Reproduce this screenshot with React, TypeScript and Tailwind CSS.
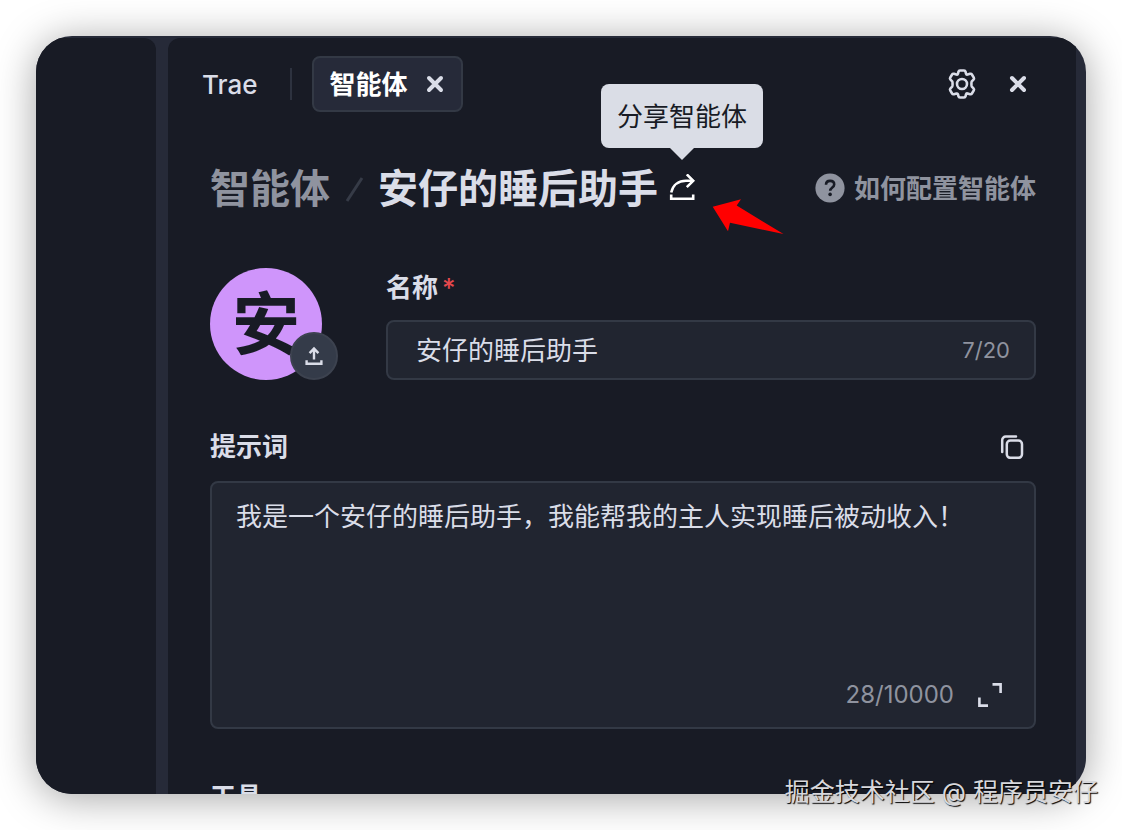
import { useState } from "react";

function CloseIcon() {
  return (
    <svg className="h-[18px] w-[18px]" viewBox="0 0 18 18" fill="none" stroke="currentColor" strokeWidth={4} strokeLinecap="round">
      <path d="M3 3l12 12M15 3L3 15" />
    </svg>
  );
}

function GearIcon() {
  return (
    <svg className="h-[30px] w-[30px]" viewBox="0 0 30 30" fill="none" stroke="currentColor" strokeWidth={2.6} strokeLinejoin="round">
      <path d="M13 1.5h4c.9 0 1.4.6 1.6 1.4l.4 1.7c.2.7.9 1.1 1.6.9l2.4-.7c.8-.2 1.5 0 1.9.7l1.9 3.2c.4.7.3 1.4-.3 2l-1.7 1.7c-.5.6-.5 4.6 0 5.2l1.7 1.7c.6.6.7 1.3.3 2l-1.9 3.2c-.4.7-1.1.9-1.9.7l-2.4-.7c-.7-.2-1.4.2-1.6.9l-.4 1.7c-.2.8-.7 1.4-1.6 1.4h-4c-.9 0-1.4-.6-1.6-1.4l-.4-1.7c-.2-.7-.9-1.1-1.6-.9l-2.4.7c-.8.2-1.5 0-1.9-.7l-1.9-3.2c-.4-.7-.3-1.4.3-2l1.7-1.7c.5-.6.5-4.6 0-5.2L3.5 10.7c-.6-.6-.7-1.3-.3-2l1.9-3.2c.4-.7 1.1-.9 1.9-.7l2.4.7c.7.2 1.4-.2 1.6-.9l.4-1.7c.2-.8.7-1.4 1.6-1.4z" />
      <circle cx="15" cy="15" r="5" />
    </svg>
  );
}

function ShareIcon() {
  return (
    <svg className="h-7 w-7" viewBox="0 0 28 28" fill="none" stroke="currentColor" strokeWidth={2.6}>
      <path d="M3.2 18.5C5 10.8 10.8 6.8 18 6.8h7" />
      <path d="M18.8 0.4l6.4 6.4-6.4 6.4" />
      <path d="M3.2 20.6v4.2h22v-4.2" />
    </svg>
  );
}

function UploadIcon() {
  return (
    <svg className="h-5 w-5" viewBox="0 0 20 20" fill="none" stroke="currentColor" strokeWidth={2.4}>
      <path d="M10 13.5V3M5.6 7.2L10 2.6l4.4 4.6" />
      <path d="M2.6 14.2v3.6h14.8v-3.6" />
    </svg>
  );
}

function CopyIcon() {
  return (
    <svg className="h-6 w-6" viewBox="0 0 24 24" fill="none" stroke="currentColor" strokeWidth={2.5} strokeLinecap="round">
      <rect x="6.8" y="5.6" width="15.2" height="17.2" rx="3.6" />
      <path d="M2.2 17V5.2a3.6 3.6 0 0 1 3.6-3.6H16" />
    </svg>
  );
}

function ExpandIcon() {
  return (
    <svg className="h-6 w-6" viewBox="0 0 24 24" fill="none" stroke="currentColor" strokeWidth={2.6}>
      <path d="M14.5 1.4h8.1V10M1.4 14.5v8.1H10" />
    </svg>
  );
}

export default function App() {
  const [name, setName] = useState("安仔的睡后助手");
  const [prompt, setPrompt] = useState("我是一个安仔的睡后助手，我能帮我的主人实现睡后被动收入！");

  return (
    <div className="relative flex h-screen overflow-hidden bg-white p-9 font-['Inter','Noto_Sans_CJK_SC',sans-serif] text-[26px] leading-9 text-[#dadde8]">
      <div className="flex min-w-0 flex-1 gap-3 overflow-hidden rounded-[36px] bg-[#262a38] pt-0.5 pr-2.5 shadow-[0_4px_40px_rgba(0,0,0,0.36)]">
        <aside className="w-[120px] shrink-0 rounded-t-xl bg-[#181b25]" />

        <main className="min-w-0 flex-1 rounded-tl-xl bg-[#181b25]">
          <header className="flex items-center pt-[18px] pr-[49px] pl-[34px]">
            <span className="pt-0.5 font-medium">Trae</span>
            <span className="ml-[33px] h-8 w-0.5 bg-[#2d323f]" />
            <div className="ml-5 flex h-14 items-center gap-[18px] rounded-lg border-2 border-[#333945] bg-[#262a39] pr-[17px] pl-[15px]">
              <span className="pt-0.5 font-bold text-white">智能体</span>
              <button type="button" aria-label="关闭标签">
                <CloseIcon />
              </button>
            </div>
            <div className="ml-auto flex items-center gap-8">
              <button type="button" aria-label="设置">
                <GearIcon />
              </button>
              <button type="button" aria-label="关闭">
                <CloseIcon />
              </button>
            </div>
          </header>

          <div className="pr-10 pl-[42px]">
            <div className="mt-12 flex h-14 items-center">
              <a href="#" className="pt-0.5 text-[40px] leading-14 font-bold text-[#8f939f]">智能体</a>
              <svg className="mx-3.5 h-7 w-5" viewBox="0 0 20 28" fill="none" stroke="#363b47" strokeWidth={3}>
                <path d="M3 27L18 4" />
              </svg>
              <h1 className="pt-0.5 text-[40px] leading-14 font-bold">安仔的睡后助手</h1>
              <div className="relative ml-2.5">
                <button type="button" aria-label="分享智能体" className="block text-white">
                  <ShareIcon />
                </button>
                <div role="tooltip" className="absolute bottom-full left-1/2 mb-3.5 flex -translate-x-1/2 flex-col items-center">
                  <span className="flex h-16 items-center rounded-lg bg-[#dadde6] px-4 pt-0.5 whitespace-nowrap text-[#181b25]">分享智能体</span>
                  <svg className="h-3 w-6" viewBox="0 0 24 12" fill="#dadde6">
                    <path d="M0 0h24L12 12z" />
                  </svg>
                </div>
                <svg className="absolute top-6 left-11 h-9 w-[72px]" viewBox="0 0 72 36" fill="#ff0000">
                  <path d="M0.7 8.7L29 1.3l-4.3 6.2L71.5 36 18 24.7l-2 8.6z" />
                </svg>
              </div>
              <a href="#" className="ml-auto flex items-center gap-[9px] font-bold text-[#8f939f]">
                <svg className="h-[30px] w-[30px]" viewBox="0 0 30 30" fill="none">
                  <circle cx="15" cy="15" r="14.6" fill="#8f939f" />
                  <path d="M11 11.8c0-2.4 1.7-3.9 4.1-3.9s4.1 1.4 4.1 3.6c0 3-4 2.9-4 6.3" stroke="#181b25" strokeWidth={2.6} />
                  <circle cx="15.1" cy="21.4" r="1.8" fill="#181b25" />
                </svg>
                <span className="pt-0.5">如何配置智能体</span>
              </a>
            </div>

            <div className="mt-[52px] flex gap-16">
              <div className="relative h-28 w-28 shrink-0">
                <div className="flex h-28 w-28 items-center justify-center rounded-full bg-[#cf95fb] text-[68px] leading-none font-bold text-[#181b25]">安</div>
                <button type="button" aria-label="上传头像" className="absolute -right-4 bottom-0 flex h-12 w-12 items-center justify-center rounded-full border-2 border-[#3c424f] bg-[#343b49]">
                  <UploadIcon />
                </button>
              </div>
              <div className="min-w-0 flex-1">
                <label htmlFor="agent-name" className="block pt-0.5 font-bold">
                  名称<span className="ml-1 font-medium text-[#e5484d]">*</span>
                </label>
                <div className="mt-3.5 flex h-15 items-center rounded-lg border-2 border-[#333945] bg-[#212530] pr-6 pl-7">
                  <input
                    id="agent-name"
                    className="min-w-0 flex-1 bg-transparent pt-0.5 outline-none"
                    maxLength={20}
                    value={name}
                    onChange={(e) => setName(e.target.value)}
                  />
                  <span className="text-[22px] text-[#8f939f]">{name.length}/20</span>
                </div>
              </div>
            </div>

            <div className="mt-[47px] flex h-10 items-center justify-between pr-3">
              <label htmlFor="agent-prompt" className="font-bold">提示词</label>
              <button type="button" aria-label="复制">
                <CopyIcon />
              </button>
            </div>
            <div className="mt-3.5 flex h-[248px] flex-col rounded-lg border-2 border-[#333945] bg-[#212530]">
              <textarea
                id="agent-prompt"
                className="w-full flex-1 resize-none bg-transparent px-6 pt-4 outline-none"
                value={prompt}
                onChange={(e) => setPrompt(e.target.value)}
              />
              <div className="flex h-16 items-center justify-end gap-6 pr-8">
                <span className="text-2xl text-[#8f939f]">{prompt.length}/10000</span>
                <button type="button" aria-label="展开">
                  <ExpandIcon />
                </button>
              </div>
            </div>

            <h2 className="mt-12 leading-10 font-bold">工具</h2>
          </div>
        </main>
      </div>

      <div className="absolute right-6 bottom-5 text-[25px] text-[#d8d8dc] [text-shadow:1px_1px_1px_#000]">掘金技术社区 @ 程序员安仔</div>
    </div>
  );
}
